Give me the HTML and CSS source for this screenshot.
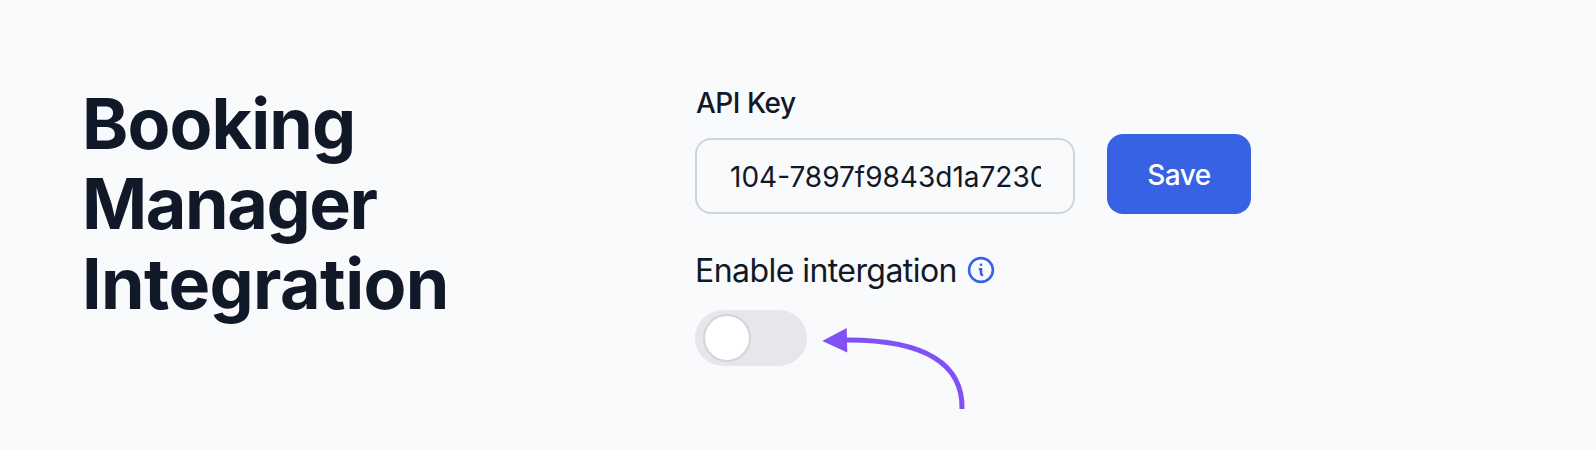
FILE: index.html
```
<!DOCTYPE html>
<html lang="en">
<head>
  <meta charset="UTF-8">
  <meta name="viewport" content="width=device-width, initial-scale=1.0">
  <title>Booking Manager Integration</title>
  <link rel="stylesheet" href="styles.css">
</head>
<body>
  <main class="settings">
    <h1 class="title">
      <span class="line line-booking">Booking</span>
      <span class="line">Manager</span>
      <span class="line line-integration">Integration</span>
    </h1>

    <form class="form">
      <label class="label" for="api-key">API Key</label>
      <div class="key-row">
        <input class="key-input" type="text" id="api-key" value="104-7897f9843d1a7230">
        <button class="save" type="button">Save</button>
      </div>

      <div class="enable">
        <span class="enable-text">Enable intergation</span>
        <svg class="info" viewBox="0 0 28 28" width="28" height="28" fill="none" stroke="currentColor">
          <circle cx="14" cy="14" r="11.9" stroke-width="2.6"/>
          <circle cx="14" cy="8.8" r="1.3" fill="currentColor" stroke="none"/>
          <path d="M11.8 13.2h2.2v4.4q0 1.5 2.2 1.3" stroke-width="2.5"/>
        </svg>
      </div>

      <div class="toggle-row">
        <button class="toggle" type="button" role="switch" aria-checked="false" aria-label="Enable"><span class="knob"></span></button>
        <svg class="arrow" viewBox="0 0 165 85" width="165" height="85">
          <path d="M38 15C120 14.5 156 40 155 84" fill="none" stroke="currentColor" stroke-width="5"/>
          <path d="M15.3 16L39.7 3l.6 24.5z" fill="currentColor"/>
        </svg>
      </div>
    </form>
  </main>
</body>
</html>
```
FILE: styles.css
```
:root {
  --ink: #111827;
  --blue: #3762e3;
}

* {
  box-sizing: border-box;
}

body {
  margin: 0;
  background-color: #f9fafc;
  color: var(--ink);
  font-family: Inter, sans-serif;
}

.settings {
  display: flex;
  height: 450px;
  padding: 84px 80px 0 82px;
}

.title {
  width: 613px;
  margin: 0;
  font-size: 70px;
  font-weight: 700;
  line-height: 80px;
  letter-spacing: -1.4px;
}

.line {
  display: block;
}

.line-booking {
  letter-spacing: -0.9px;
}

.line-integration {
  letter-spacing: -0.6px;
}

.form {
  display: flex;
  flex-direction: column;
}

.label {
  margin-top: -1px;
  margin-bottom: 11px;
  padding-left: 1px;
  font-size: 28px;
  font-weight: 500;
  line-height: 40px;
  letter-spacing: -0.5px;
}

.key-row {
  display: flex;
  align-items: flex-end;
  gap: 32px;
}

.key-input {
  width: 380px;
  height: 76px;
  padding: 1px 32px 0;
  border: 2px solid #d1d5db;
  border-radius: 16px;
  background-color: transparent;
  color: var(--ink);
  font-family: inherit;
  font-size: 28px;
  text-indent: 1px;
}

.save {
  width: 144px;
  height: 80px;
  padding: 2px 0 0;
  border: none;
  border-radius: 16px;
  background-color: var(--blue);
  color: white;
  font-family: inherit;
  font-size: 28px;
  font-weight: 500;
  letter-spacing: -0.5px;
  cursor: pointer;
}

.enable {
  display: flex;
  align-items: center;
  gap: 10px;
  height: 48px;
  margin-top: 32px;
  font-size: 32px;
}

.enable-text {
  letter-spacing: -0.56px;
}

.info {
  color: var(--blue);
}

.toggle-row {
  display: flex;
  align-items: flex-start;
  margin-top: 16px;
}

.toggle {
  width: 112px;
  height: 56px;
  padding: 4px 8px;
  border: none;
  border-radius: 28px;
  background-color: #e5e7eb;
}

.knob {
  display: block;
  width: 48px;
  height: 48px;
  border: 2px solid #d1d5db;
  border-radius: 50%;
  background-color: white;
}

.arrow {
  margin-top: 15px;
  color: #8052f5;
}
```
